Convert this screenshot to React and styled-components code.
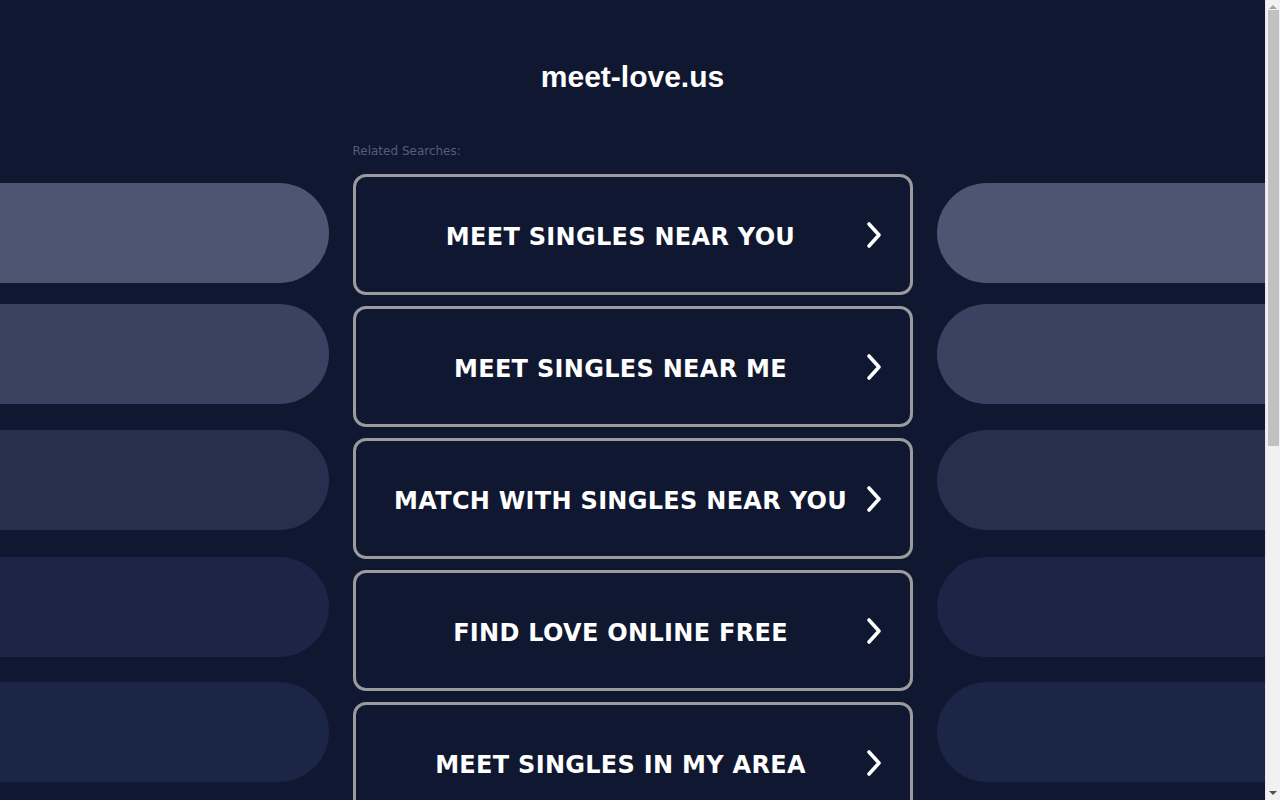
import { createGlobalStyle, styled } from "styled-components";

const GlobalStyle = createGlobalStyle`
	html, body {
		margin: 0;
		padding: 0;
		background: #101730;
		overflow: hidden;
	}
	body {
		font-family: "DejaVu Sans", Verdana, sans-serif;
	}
`;

const Page = styled.div`
	width: 1265px;
	min-height: 1410px;
	background: #101730;
	display: flex;
	flex-direction: column;
`;

const Header = styled.h1`
	margin: 0;
	padding-top: 59px;
	height: 71px;
	text-align: center;
	font-family: "Liberation Sans", Arial, sans-serif;
	font-weight: bold;
	font-size: 30px;
	line-height: 36px;
	color: #fff;
`;

const Layout = styled.div`
	display: grid;
	grid-template-columns: 1fr 560px 1fr;
	column-gap: 24px;
	margin-top: 12px;
`;

const Side = styled.div`
	display: flex;
	flex-direction: column;
	padding-top: 41px;
`;

const Pill = styled.div`
	height: 100px;
	margin-top: ${(p) => p.$offset}px;
	background: ${(p) => p.$color};
	border-radius: ${(p) => (p.$side === "left" ? "0 50px 50px 0" : "50px 0 0 50px")};
`;

const Center = styled.div`
	display: flex;
	flex-direction: column;
`;

const Label = styled.div`
	font-size: 12px;
	line-height: 16px;
	color: #555d7c;
	height: 32px;
	padding-top: 1px;
	box-sizing: border-box;
`;

const List = styled.ul`
	list-style: none;
	margin: 0;
	padding: 0;
	display: flex;
	flex-direction: column;
	gap: 11px;
`;

const Link = styled.li`
	height: 121px;
	box-sizing: border-box;
	border: 3px solid #9b9b9d;
	border-radius: 13px;
	display: flex;
	align-items: center;
	justify-content: center;
	position: relative;
	padding-right: 24px;
	cursor: pointer;
	span {
		font-weight: bold;
		font-size: 24px;
		letter-spacing: 0.3px;
		color: #fff;
		text-transform: uppercase;
		margin-top: 4px;
	}
	svg {
		position: absolute;
		right: 28px;
		top: 50%;
		transform: translateY(-50%);
	}
`;

const Scrollbar = styled.div`
	position: fixed;
	top: 0;
	right: 0;
	width: 15px;
	height: 100vh;
	background: #f1f1f1;
	border-left: 1px solid #e6e6e6;
	box-sizing: border-box;
	display: flex;
	flex-direction: column;
	align-items: center;
`;

const Arrow = styled.div`
	width: 0;
	height: 0;
	border-left: 4px solid transparent;
	border-right: 4px solid transparent;
	${(p) =>
		p.$dir === "up"
			? "border-bottom: 4px solid #a3a3a3; margin-top: 5px;"
			: "border-top: 4px solid #505050; margin-bottom: 5px;"}
`;

const Thumb = styled.div`
	width: 11px;
	height: 436px;
	margin-top: 1px;
	background: #c1c1c1;
	flex: none;
`;

const Track = styled.div`
	flex: 1;
`;

const pills = [
	{ color: "#4c5673", offset: 0 },
	{ color: "#394260", offset: 21 },
	{ color: "#272f4e", offset: 26 },
	{ color: "#1c2546", offset: 27 },
	{ color: "#1b2545", offset: 25 },
];

const searches = [
	"Meet Singles Near You",
	"Meet Singles Near Me",
	"Match With Singles Near You",
	"Find Love Online Free",
	"Meet Singles In My Area",
];

function Chevron() {
	return (
		<svg width="16" height="28" viewBox="0 0 16 28">
			<polyline
				points="3,3 13,14 3,25"
				fill="none"
				stroke="#fff"
				strokeWidth="3.6"
				strokeLinecap="round"
				strokeLinejoin="round"
			/>
		</svg>
	);
}

export default function App() {
	return (
		<Page>
			<GlobalStyle />
			<Header>meet-love.us</Header>
			<Layout>
				<Side>
					{pills.map((p, i) => (
						<Pill key={i} $side="left" $color={p.color} $offset={p.offset} />
					))}
				</Side>
				<Center>
					<Label>Related Searches:</Label>
					<List>
						{searches.map((s) => (
							<Link key={s}>
								<span>{s}</span>
								<Chevron />
							</Link>
						))}
					</List>
				</Center>
				<Side>
					{pills.map((p, i) => (
						<Pill key={i} $side="right" $color={p.color} $offset={p.offset} />
					))}
				</Side>
			</Layout>
			<Scrollbar>
				<Arrow $dir="up" />
				<Thumb />
				<Track />
				<Arrow $dir="down" />
			</Scrollbar>
		</Page>
	);
}
